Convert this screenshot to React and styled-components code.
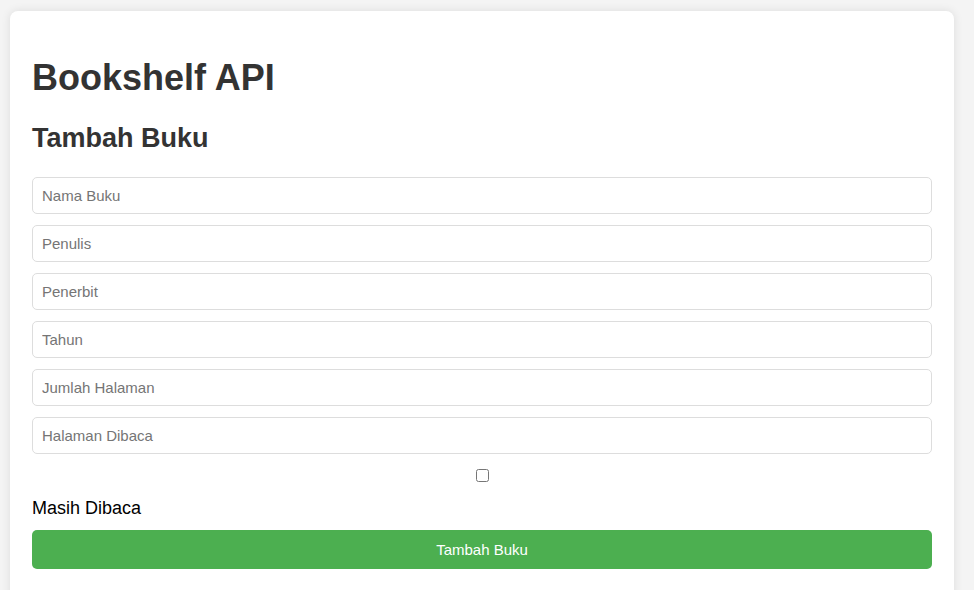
import React from "react";
import styled, { createGlobalStyle } from "styled-components";

const Global = createGlobalStyle`
  html, body { margin: 0; padding: 0; background: #f4f4f4; }
  body { font-family: "Liberation Sans", Arial, sans-serif; overflow: hidden; }
  * { box-sizing: border-box; }
`;

const Page = styled.div`
  padding: 11px 20px 0 10px;
  height: 590px;
`;

const Card = styled.div`
  background: #fff;
  border-radius: 8px;
  box-shadow: 0 0 10px rgba(0, 0, 0, 0.1);
  padding: 25px 22px 22px;
  min-height: 600px;
`;

const Title = styled.h1`
  margin: 22px 0 0;
  font-size: 36px;
  line-height: 40px;
  font-weight: bold;
  color: #333;
`;

const Subtitle = styled.h2`
  margin: 25px 0 0;
  font-size: 27px;
  line-height: 30px;
  font-weight: bold;
  color: #333;
`;

const Form = styled.form`
  display: flex;
  flex-direction: column;
  margin-top: 24px;
`;

const Field = styled.input`
  display: block;
  width: 100%;
  height: 37px;
  margin: 0 0 11px;
  padding: 0 9px;
  border: 1px solid #ddd;
  border-radius: 5px;
  font-family: "Liberation Sans", Arial, sans-serif;
  font-size: 15px;
  color: #333;
  outline: none;
  &::placeholder { color: #757575; }
`;

const Check = styled.input`
  display: block;
  width: 13px;
  height: 13px;
  margin: 4px auto 16px;
  align-self: center;
`;

const Label = styled.label`
  display: block;
  font-size: 18px;
  line-height: 20px;
  color: #000;
  margin-bottom: 12px;
`;

const Button = styled.button`
  width: 100%;
  height: 39px;
  border: none;
  border-radius: 5px;
  background: #4caf50;
  color: #fff;
  font-family: "Liberation Sans", Arial, sans-serif;
  font-size: 15px;
  cursor: pointer;
`;

const fields = [
  "Nama Buku",
  "Penulis",
  "Penerbit",
  "Tahun",
  "Jumlah Halaman",
  "Halaman Dibaca",
];

export default function App() {
  return (
    <>
      <Global />
      <Page>
        <Card>
          <Title>Bookshelf API</Title>
          <Subtitle>Tambah Buku</Subtitle>
          <Form onSubmit={(e) => e.preventDefault()}>
            {fields.map((f) => (
              <Field key={f} type="text" placeholder={f} />
            ))}
            <Check type="checkbox" id="reading" />
            <Label htmlFor="reading">Masih Dibaca</Label>
            <Button type="submit">Tambah Buku</Button>
          </Form>
        </Card>
      </Page>
    </>
  );
}
